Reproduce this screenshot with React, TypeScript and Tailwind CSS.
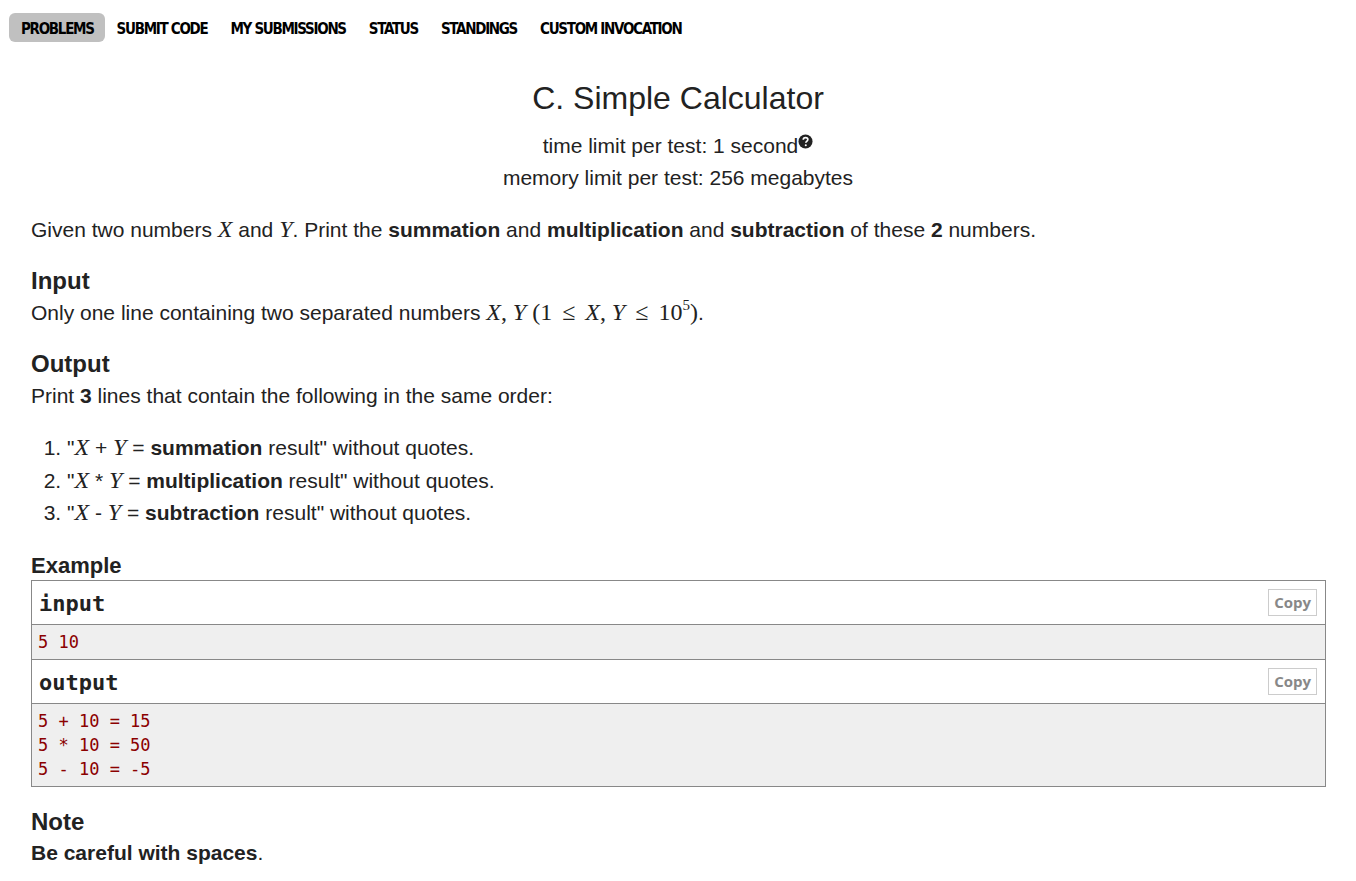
import React from 'react';

const navItems = ['PROBLEMS', 'SUBMIT CODE', 'MY SUBMISSIONS', 'STATUS', 'STANDINGS', 'CUSTOM INVOCATION'];

// MathJax-like italic variable
const M = ({ children }: { children: React.ReactNode }) => (
    <span className="font-['Liberation_Serif',serif] italic text-[24px] leading-none">{children}</span>
);

const N = ({ children, className = '' }: { children: React.ReactNode; className?: string }) => (
    <span className={`font-['Liberation_Serif',serif] text-[24px] leading-none ${className}`}>{children}</span>
);

const SampleBlock = ({ title, lines, last = false }: { title: string; lines: string[]; last?: boolean }) => (
    <div className={last ? '' : 'border-b border-[#888]'}>
        <div className="flex items-center justify-between h-[44px] pl-[7px] pr-[8px] border-b border-[#888]">
            <span className="pt-[3px] font-['DejaVu_Sans_Mono',monospace] font-bold text-[22px] text-[#222]">{title}</span>
            <button className="px-[5px] h-[27px] border border-[#ccc] font-['Open_Sans',sans-serif] font-bold text-[15px] leading-none text-[#888]">Copy</button>
        </div>
        <pre className="bg-[#efefef] px-[6px] py-[5px] font-['DejaVu_Sans_Mono',monospace] text-[17px] leading-[24px] text-[#8b0000]">
            {lines.join('\n')}
        </pre>
    </div>
);

export default function App() {
    return (
        <div className="min-h-[881px] bg-white text-[#222] font-['Liberation_Sans',Arial,sans-serif]">
            <nav className="flex items-center pt-[13px] pl-[9px]">
                {navItems.map((item, i) => (
                    <a
                        key={item}
                        className={`h-[29px] flex items-center pt-[3px] pl-[12px] pr-[11px] rounded-[6px] font-['DejaVu_Sans_Condensed',sans-serif] font-bold text-[15px] tracking-[-1.3px] text-black ${i === 0 ? 'bg-[#c0c0c0]' : ''}`}
                    >
                        {item}
                    </a>
                ))}
            </nav>

            <div className="text-center mt-[38px]">
                <h1 className="text-[32px] leading-[36px] text-[#222]">C. Simple Calculator</h1>
                <div className="mt-[14px] text-[21px] leading-[32px]">
                    <div>
                        time limit per test: 1 second
                        <svg className="inline-block align-top mt-[4px]" width="15" height="15" viewBox="0 0 16 16">
                            <circle cx="8" cy="8" r="7.5" fill="#222" />
                            <path d="M5.6 6.2c0-1.5 1.1-2.4 2.5-2.4s2.4.9 2.4 2.1c0 1.9-2.2 1.9-2.2 3.4" fill="none" stroke="#fff" strokeWidth="1.8" />
                            <circle cx="8.3" cy="12" r="1.1" fill="#fff" />
                        </svg>
                    </div>
                    <div>memory limit per test: 256 megabytes</div>
                </div>
            </div>

            <div className="px-[31px] text-[21px] leading-[32px]">
                <p className="mt-[20px]">
                    Given two numbers <M>X</M> and <M>Y</M>. Print the <b>summation</b> and <b>multiplication</b> and <b>subtraction</b> of these <b>2</b> numbers.
                </p>

                <h2 className="mt-[19px] text-[24px] leading-[32px] font-bold">Input</h2>
                <p>
                    Only one line containing two separated numbers <M>X</M><N>,</N> <M>Y</M>
                    <N className="ml-[6px]">(1</N>
                    <N className="mx-[10px]">≤</N>
                    <M>X</M><N>,</N> <M>Y</M>
                    <N className="mx-[10px]">≤</N>
                    <N>10<sup className="text-[15px] -top-[10px]">5</sup>)</N>.
                </p>

                <h2 className="mt-[19px] text-[24px] leading-[32px] font-bold">Output</h2>
                <p>Print <b>3</b> lines that contain the following in the same order:</p>

                <ol className="list-decimal pl-[36px] mt-[20px] leading-[32.5px]">
                    <li>"<M>X</M> + <M>Y</M> = <b>summation</b> result" without quotes.</li>
                    <li>"<M>X</M> * <M>Y</M> = <b>multiplication</b> result" without quotes.</li>
                    <li>"<M>X</M> - <M>Y</M> = <b>subtraction</b> result" without quotes.</li>
                </ol>

                <h2 className="mt-[23px] text-[22px] leading-[26px] font-bold">Example</h2>
                <div className="border border-[#888] mt-[1px] w-[1295px]">
                    <SampleBlock title="input" lines={['5 10']} />
                    <SampleBlock title="output" lines={['5 + 10 = 15', '5 * 10 = 50', '5 - 10 = -5']} last />
                </div>

                <h2 className="mt-[19px] text-[24px] leading-[32px] font-bold">Note</h2>
                <p className="-mt-[1px]"><b>Be careful with spaces</b>.</p>
            </div>
        </div>
    );
}
